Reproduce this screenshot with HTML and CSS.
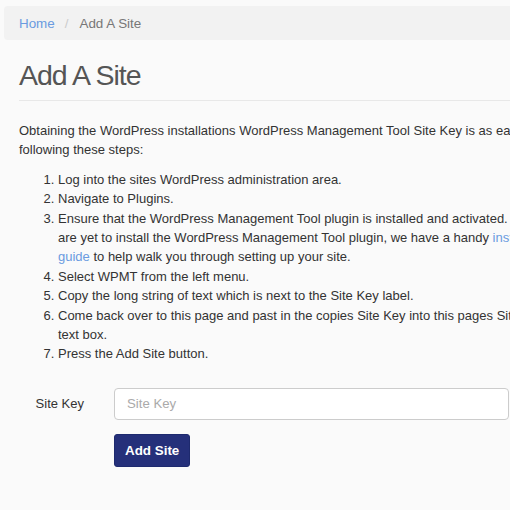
FILE: index.html
```html
<!DOCTYPE html>
<html lang="en">
<head>
<meta charset="utf-8">
<title>Add A Site</title>
<link rel="stylesheet" href="styles.css">
</head>
<body>
<div class="page">
  <ol class="breadcrumb">
    <li><a href="#">Home</a></li>
    <li class="active">Add A Site</li>
  </ol>
  <div class="content">
    <h1 class="page-header">Add A Site</h1>
    <p>Obtaining the WordPress installations WordPress Management Tool Site Key is as easy as following these steps:</p>
    <ol class="steps">
      <li>Log into the sites WordPress administration area.</li>
      <li>Navigate to Plugins.</li>
      <li>Ensure that the WordPress Management Tool plugin is installed and activated. If you are yet to install the WordPress Management Tool plugin, we have a handy <a href="#">installation guide</a> to help walk you through setting up your site.</li>
      <li>Select WPMT from the left menu.</li>
      <li>Copy the long string of text which is next to the Site Key label.</li>
      <li>Come back over to this page and past in the copies Site Key into this pages Site Key text box.</li>
      <li>Press the Add Site button.</li>
    </ol>
    <form class="site-form">
      <div class="form-row">
        <label class="form-label" for="sitekey">Site Key</label>
        <input class="form-input" id="sitekey" type="text" placeholder="Site Key">
      </div>
      <div class="form-row">
        <span class="form-label"></span>
        <button class="btn-primary" type="button">Add Site</button>
      </div>
    </form>
  </div>
</div>
</body>
</html>
```

FILE: styles.css
```css
html, body {
  margin: 0;
  padding: 0;
  overflow: hidden;
}
body {
  background: #fafafa;
  font-family: "Liberation Sans", Arial, sans-serif;
  font-size: 13px;
  line-height: 19.4px;
  color: #333;
}
.page {
  width: 557px;
  padding: 6px 0 0 4px;
}
.breadcrumb {
  list-style: none;
  margin: 0;
  padding: 8px 15px 6px;
  background: #f2f2f2;
  border-radius: 4px;
  display: flex;
  font-size: 13.4px;
  line-height: 20px;
}
.breadcrumb li {
  color: #777;
}
.breadcrumb li + li::before {
  content: "/";
  color: #ccc;
  padding: 0 11px 0 10px;
}
a {
  color: #6a9be0;
  text-decoration: none;
}
.content {
  padding: 0 0 0 15px;
}
.page-header {
  margin: 19px 0 0;
  padding-bottom: 8px;
  border-bottom: 1px solid #e8e8e8;
  font-size: 28.5px;
  letter-spacing: -1px;
  font-weight: 300;
  line-height: 33px;
  color: #555;
}
p {
  margin: 20px 0 10px;
}
.steps {
  margin: 0 0 10px;
  padding-left: 39px;
}
.site-form {
  margin-top: 24px;
}
.form-row {
  display: flex;
  align-items: center;
  margin-bottom: 14px;
}
.form-label {
  width: 65px;
  padding-right: 30px;
  text-align: right;
  color: #333;
}
.form-input {
  width: 395px;
  height: 32px;
  box-sizing: border-box;
  border: 1px solid #ccc;
  border-radius: 4px;
  background: #fff;
  padding: 6px 12px;
  font-family: inherit;
  font-size: 13.2px;
  color: #555;
}
.form-input::placeholder {
  color: #aaa;
}
.btn-primary {
  height: 33px;
  padding: 0 10px;
  background: #25307a;
  border: 1px solid #1e2a6e;
  border-radius: 3px;
  color: #fff;
  font-family: inherit;
  font-size: 13.4px;
  font-weight: bold;
}
```
